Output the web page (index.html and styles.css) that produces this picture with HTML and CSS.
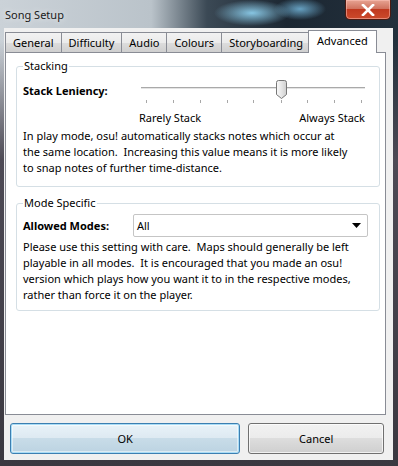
FILE: index.html
```html
<!DOCTYPE html>
<html lang="en">
<head>
  <meta charset="UTF-8">
  <title>Song Setup</title>
  <meta name="viewport" content="width=device-width, initial-scale=1.0">
  <link rel="stylesheet" href="styles.css">
</head>
<body>
  <div class="window">
    <header class="titlebar">
      <span class="title">Song Setup</span>
      <button class="close-btn" aria-label="Close">
        <svg width="14" height="12" viewBox="0 0 14 12">
          <path d="M2 1 L12 11 M12 1 L2 11" stroke="#fff" stroke-width="2.6" stroke-linecap="square"/>
        </svg>
      </button>
    </header>

    <div class="client">
      <nav class="tabs">
        <span class="tab">General</span>
        <span class="tab">Difficulty</span>
        <span class="tab">Audio</span>
        <span class="tab">Colours</span>
        <span class="tab">Storyboarding</span>
        <span class="tab active">Advanced</span>
      </nav>

      <main class="panel">
        <fieldset class="group">
          <legend>Stacking</legend>
          <div class="slider-row">
            <label class="field-label">Stack Leniency:</label>
            <svg class="slider" width="235" height="30" viewBox="0 0 235 30">
              <line x1="6" y1="13.5" x2="230" y2="13.5" stroke="#a9a9a9" stroke-width="1"/>
              <line x1="6" y1="14.5" x2="230" y2="14.5" stroke="#e4e4e4" stroke-width="1"/>
              <g stroke="#a8a8a8" stroke-width="1">
                <line x1="11.5" y1="26" x2="11.5" y2="29"/>
                <line x1="38.5" y1="26" x2="38.5" y2="29"/>
                <line x1="65.5" y1="26" x2="65.5" y2="29"/>
                <line x1="92.5" y1="26" x2="92.5" y2="29"/>
                <line x1="118.5" y1="26" x2="118.5" y2="29"/>
                <line x1="146.5" y1="26" x2="146.5" y2="29"/>
                <line x1="172.5" y1="26" x2="172.5" y2="29"/>
                <line x1="199.5" y1="26" x2="199.5" y2="29"/>
                <line x1="226.5" y1="26" x2="226.5" y2="29"/>
              </g>
              <defs>
                <linearGradient id="thumb" x1="0" y1="0" x2="1" y2="0">
                  <stop offset="0" stop-color="#fafafa"/>
                  <stop offset="0.5" stop-color="#e6e6e6"/>
                  <stop offset="1" stop-color="#cfcfcf"/>
                </linearGradient>
              </defs>
              <path d="M141.5 8.5 Q141.5 6.5 143.5 6.5 L149.5 6.5 Q151.5 6.5 151.5 8.5 L151.5 20.5 L146.5 24.5 L141.5 20.5 Z" fill="url(#thumb)" stroke="#777"/>
            </svg>
          </div>
          <div class="slider-labels">
            <span>Rarely Stack</span>
            <span>Always Stack</span>
          </div>
          <p class="note">In play mode, osu! automatically stacks notes which occur at<br>the same location.&nbsp; Increasing this value means it is more likely<br>to snap notes of further time-distance.</p>
        </fieldset>

        <fieldset class="group">
          <legend>Mode Specific</legend>
          <div class="select-row">
            <label class="field-label">Allowed Modes:</label>
            <div class="select">
              <span>All</span>
              <svg width="9" height="5" viewBox="0 0 9 5"><path d="M0 0 H9 L4.5 5 Z" fill="#000"/></svg>
            </div>
          </div>
          <p class="note">Please use this setting with care.&nbsp; Maps should generally be left<br>playable in all modes.&nbsp; It is encouraged that you made an osu!<br>version which plays how you want it to in the respective modes,<br>rather than force it on the player.</p>
        </fieldset>
      </main>

      <footer class="buttons">
        <button class="btn btn-default">OK</button>
        <button class="btn">Cancel</button>
      </footer>
    </div>
  </div>
</body>
</html>
```

FILE: styles.css
```css
body {
  margin: 0;
  width: 398px;
  height: 466px;
  overflow: hidden;
  font-family: "Noto Sans", "Open Sans", sans-serif;
  font-size: 11px;
  color: #000;
  background:
    radial-gradient(ellipse 38px 13px at 252px 13px, rgba(140, 205, 235, 0.95), transparent),
    radial-gradient(ellipse 26px 11px at 300px 9px, rgba(120, 190, 228, 0.8), transparent),
    linear-gradient(to bottom, rgba(0, 0, 0, 0) 40px, #4d4a55 160px, #3a3840 100%),
    linear-gradient(to right, #cbd2d8 0%, #bac3ca 38%, #3b4955 52%, #1c2732 72%, #22303c 100%);
}

.window {
  display: flex;
  flex-direction: column;
  height: 466px;
}

.titlebar {
  height: 28px;
  display: flex;
  justify-content: space-between;
  align-items: flex-start;
}

.title {
  padding: 7px 0 0 5px;
  line-height: 16px;
  font-size: 11px;
  color: #1a1a1a;
  text-shadow: 0 0 6px rgba(255, 255, 255, 0.8);
}

.close-btn {
  width: 46px;
  height: 20px;
  margin-right: 7px;
  padding: 0;
  border: 1px solid #4a1a12;
  border-top: none;
  border-radius: 0 0 5px 5px;
  background: linear-gradient(#e7a493, #d0735f 45%, #c0391f 50%, #cc4a2c 100%);
  box-shadow: inset 0 0 0 1px rgba(255, 200, 190, 0.5);
  display: flex;
  align-items: center;
  justify-content: center;
}

.client {
  flex: 1;
  margin: 0 5px 6px 4px;
  padding: 0 7px 0 1px;
  background: #f0f0f0;
  display: flex;
  flex-direction: column;
}

.tabs {
  display: flex;
  align-items: flex-end;
  height: 22px;
  margin-top: 2px;
  position: relative;
  z-index: 1;
}

.tab {
  height: 19px;
  line-height: 19px;
  padding: 0 7px;
  margin-right: -1px;
  font-size: 11px;
  border: 1px solid #898c95;
  border-bottom: none;
  background: linear-gradient(#f2f2f2, #ebebeb 50%, #dddddd 50%, #cfcfcf);
}

.tab.active {
  height: 22px;
  line-height: 20px;
  margin: 0 0 -1px -2px;
  padding: 0 8px;
  background: #fff;
}

.panel {
  height: 361px;
  border: 1px solid #898c95;
  background: #fff;
  display: flex;
  flex-direction: column;
}

.group {
  margin: 5px 5px 0 10px;
  padding: 0 6px 10px;
  border: 1px solid #d5dfe5;
  border-radius: 3px;
}

.group + .group {
  margin-top: 8px;
  padding-bottom: 7px;
}

.group legend {
  padding: 0 1px;
  line-height: 16px;
  font-size: 11px;
}

.field-label {
  width: 112px;
  flex: none;
  font-weight: bold;
  font-size: 11px;
  line-height: 16px;
}

.slider-row {
  display: flex;
  align-items: flex-start;
  height: 30px;
}

.slider-row .field-label {
  padding-top: 9px;
}

.slider-labels {
  display: flex;
  justify-content: space-between;
  margin: 6px 0 0 116px;
  width: 226px;
  line-height: 16px;
  font-size: 11px;
}

.note {
  margin: 2px 0 0;
  line-height: 16px;
  font-size: 11px;
}

.select-row {
  display: flex;
  align-items: center;
  margin-top: 3px;
}

.field-label + .select {
  margin-left: -2px;
}

.select {
  height: 21px;
  border: 1px solid #c5c5c5;
  border-radius: 2px;
  display: flex;
  align-items: center;
  justify-content: space-between;
  padding: 0 6px 0 3px;
  box-sizing: content-box;
  width: 224px;
  font-size: 11px;
}

.buttons {
  display: flex;
  gap: 8px;
  margin: 8px 2px 0 5px;
}

.btn {
  height: 31px;
  width: 136px;
  padding: 0;
  font-family: inherit;
  font-size: 11px;
  color: #000;
  border: 1px solid #707070;
  border-radius: 3px;
  background: linear-gradient(#f2f2f2, #ebebeb 50%, #dddddd 50%, #cfcfcf);
  box-shadow: inset 0 0 0 1px rgba(255, 255, 255, 0.7);
}

.btn-default {
  width: 231px;
  border-color: #3c7fb1;
  background: linear-gradient(#e9f3f9, #dde9f1 50%, #c8dce8 50%, #bcd3e2);
  box-shadow: inset 0 0 0 1px #a9dcf6, inset 0 0 0 2px rgba(255, 255, 255, 0.5);
}
```
